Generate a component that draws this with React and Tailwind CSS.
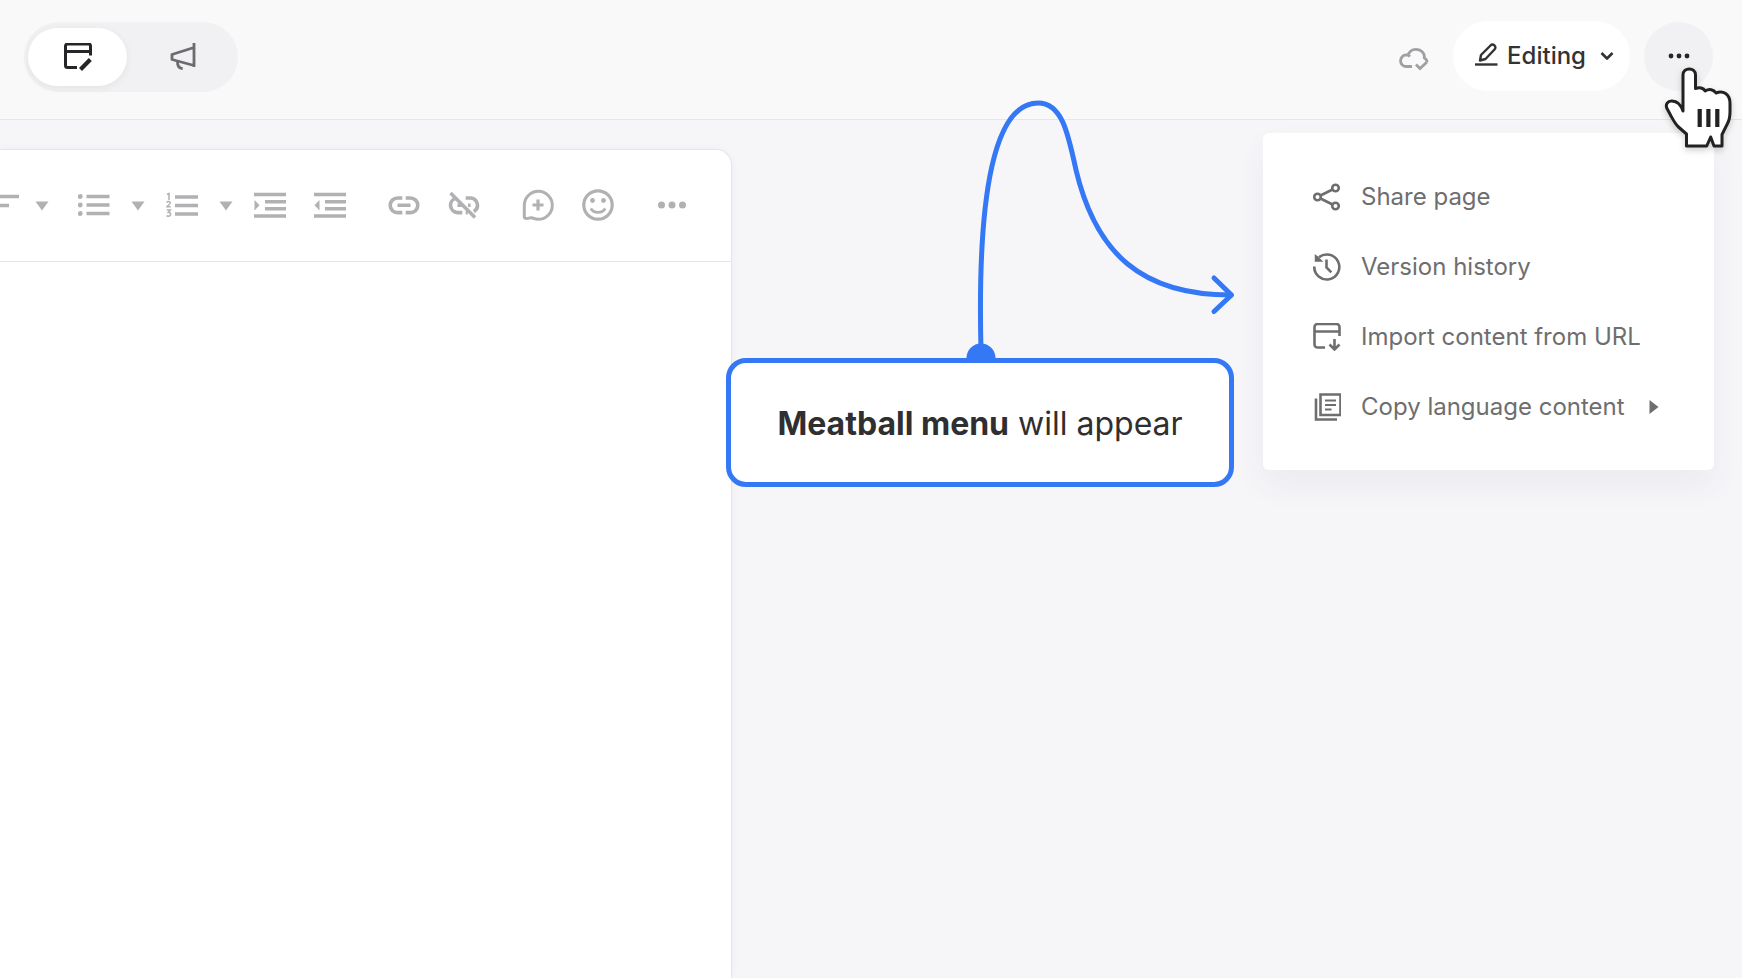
import React from 'react';

const Icon = ({ className = 'size-8', box = '0 0 32 32', width = 3, children }) => (
  <svg
    className={`shrink-0 ${className}`}
    viewBox={box}
    fill="none"
    stroke="currentColor"
    strokeWidth={width}
    aria-hidden="true"
  >
    {children}
  </svg>
);

const ToolButton = ({ label, children }) => (
  <button type="button" aria-label={label} className="shrink-0">
    <Icon width={3.6}>{children}</Icon>
  </button>
);

const CaretButton = ({ label, className = '' }) => (
  <button type="button" aria-label={label} className={`shrink-0 ${className}`}>
    <svg className="h-8 w-3.5" viewBox="0 0 14 32" fill="currentColor" aria-hidden="true">
      <path d="M0.5 12.5h13L7 21.5z" />
    </svg>
  </button>
);

const Toolbar = () => (
  <div className="box-content flex h-[109px] items-center justify-end gap-[42px] overflow-hidden border-b border-[#e4e4e7] pr-[43px] pb-0.5 text-[#b1b1b4]">
    <div className="flex shrink-0 items-center gap-[21px]">
      <div className="flex items-center gap-4">
        <ToolButton label="Align">
          <path d="M0 7.5h32M0 16.5h22" />
        </ToolButton>
        <CaretButton label="Align options" className="mr-2" />
      </div>
      <ToolButton label="Bulleted list">
        <path d="M8.5 7.500h23M8.5 16h23M8.5 24.500h23" />
        <g fill="currentColor" stroke="none">
          <circle cx="2.300" cy="7.500" r="2.400" />
          <circle cx="2.300" cy="16" r="2.400" />
          <circle cx="2.300" cy="24.500" r="2.400" />
        </g>
      </ToolButton>
      <CaretButton label="Bulleted list options" />
      <ToolButton label="Numbered list">
        <path d="M9 8h23M9 16.500h23M9 25h23" />
        <path
          strokeWidth="1.500"
          d="M1 5.500l2-1v6.500M.8 13.600c.6-1.500 3.600-1.300 3.400.4-.1 1.200-2.200 2.300-3.400 3.700h3.800M.8 21h3.500l-2 2.300c3.200-.2 3 4-.2 3.900-.8 0-1.200-.3-1.500-.7"
        />
      </ToolButton>
      <CaretButton label="Numbered list options" />
      <div className="flex items-center gap-7">
        <ToolButton label="Increase indent">
          <path d="M0 5.500h32M11 12.800h21M11 19.800h21M0 27h32" />
          <path d="M0.500 11v10.500L5.500 16.200z" fill="currentColor" stroke="none" />
        </ToolButton>
        <ToolButton label="Decrease indent">
          <path d="M0 5.500h32M11 12.800h21M11 19.800h21M0 27h32" />
          <path d="M5.500 11v10.500L.5 16.200z" fill="currentColor" stroke="none" />
        </ToolButton>
      </div>
    </div>
    <div className="flex shrink-0 gap-7">
      <ToolButton label="Insert link">
        <path d="M14.300 9H9.500a7.300 7.300 0 0 0 0 14.600h4.800M17.700 9H22.500a7.300 7.300 0 0 1 0 14.600h-4.800M9.500 16.300h13" />
      </ToolButton>
      <ToolButton label="Remove link">
        <path d="M7.500 9.400A7.300 7.300 0 0 0 9.500 23.600h4.800M17.700 9H22.500a7.300 7.300 0 0 1 3.300 13.600M17.700 23.600h2M9.500 16.300h6M20 16.300h2.500M2.500 4l24.500 24.500" />
      </ToolButton>
    </div>
    <div className="flex shrink-0 gap-7">
      <ToolButton label="Add comment">
        <path
          strokeWidth="3"
          strokeLinejoin="round"
          d="M2.300 27.500V16A14 14 0 1 1 16.300 30.300c-2.500 0-4.500-.9-6.500-1.500-1.800-.3-3.200.8-5 .8-1.600 0-2.500-.7-2.500-2.100z"
        />
        <path strokeWidth="3.200" d="M16 10.500v11M10.500 16h11" />
      </ToolButton>
      <ToolButton label="Insert emoji">
        <circle cx="16" cy="16" r="14.200" strokeWidth="3.200" />
        <path strokeWidth="2.800" d="M8.800 19.500c3.200 5.200 11.200 5.200 14.400 0" />
        <circle cx="10.500" cy="11.500" r="2.400" fill="currentColor" stroke="none" />
        <circle cx="21.500" cy="11.500" r="2.400" fill="currentColor" stroke="none" />
      </ToolButton>
    </div>
    <ToolButton label="More tools">
      <g fill="currentColor" stroke="none">
        <circle cx="5.500" cy="16" r="3.500" />
        <circle cx="16" cy="16" r="3.500" />
        <circle cx="26.500" cy="16" r="3.500" />
      </g>
    </ToolButton>
  </div>
);

const ModeSwitch = () => (
  <div className="flex h-[70px] w-[214px] items-center rounded-full bg-[#f1f1f3] px-1">
    <button
      type="button"
      aria-label="Edit content"
      aria-pressed="true"
      className="flex h-[58px] w-[99px] items-center justify-center rounded-full bg-white text-[#262629] shadow-[0_2px_8px_rgba(0,0,0,0.06)]"
    >
      <Icon className="size-7" box="0 0 28 28">
        <path strokeLinejoin="round" d="M13 24.500H3.500A2 2 0 0 1 1.500 22.500V3A2 2 0 0 1 3.500 1h21a2 2 0 0 1 2 2v9.500M1.500 8.500h25" />
        <path strokeWidth="4.200" d="M16.500 26.500l9.800-10" />
      </Icon>
    </button>
    <button
      type="button"
      aria-label="Announcements"
      aria-pressed="false"
      className="flex flex-1 items-center justify-center pl-1 text-[#6b6b70]"
    >
      <Icon className="size-7" box="0 0 28 28" width={2.8}>
        <path strokeLinejoin="round" d="M25 0v24M25 4.500L3 11.500v5L25 22.500M3 10.500v6.500" />
        <path d="M8.500 18c-.2 4.500 1 7.300 5.200 7.700" />
      </Icon>
    </button>
  </div>
);

const menuItems = [
  {
    label: 'Share page',
    icon: (
      <>
        <circle cx="4.500" cy="14" r="3.300" />
        <circle cx="22.500" cy="5" r="3.300" />
        <circle cx="22.500" cy="23" r="3.300" />
        <path d="M7.500 12.500l12-6M7.500 15.500l12 6" />
      </>
    ),
  },
  {
    label: 'Version history',
    icon: (
      <>
        <path d="M1.300 13.500A12.500 12.500 0 1 0 6 4.200" />
        <path d="M2.500 2.500l1.500 1 4.500 4.500h-6z" fill="currentColor" strokeWidth="1.500" />
        <path d="M13.500 6.500v8l4.800 4.800" />
      </>
    ),
  },
  {
    label: 'Import content from URL',
    icon: (
      <>
        <path d="M12 24.500H4.500a3 3 0 0 1-3-3V4a3 3 0 0 1 3-3h19a3 3 0 0 1 3 3v9M1.500 8.500H26.500" />
        <path d="M21.500 16v10M16.500 21.500l5 5 5-5" />
      </>
    ),
  },
  {
    label: 'Copy language content',
    submenu: true,
    icon: (
      <>
        <path d="M7.500 1.500h20v20.500h-20zM3 5.500V26.500H24" />
        <path strokeWidth="2.200" d="M12 7.500h11M12 12h11M12 16.500h6.500" />
      </>
    ),
  },
];

const MeatballMenu = () => (
  <ul
    role="menu"
    className="absolute top-[133px] right-7 z-10 w-[451px] rounded-md bg-white pt-[29px] pr-12 pb-7 pl-[50px] shadow-[0_16px_32px_rgba(60,60,110,0.06)]"
  >
    {menuItems.map(({ label, icon, submenu }) => (
      <li key={label} role="none">
        <button
          type="button"
          role="menuitem"
          className="flex h-[70px] w-full items-center gap-5 text-left text-2xl whitespace-nowrap text-[#6e6e6e]"
        >
          <Icon className="size-7" box="0 0 28 28" width={2.6}>
            {icon}
          </Icon>
          {label}
          {submenu && (
            <svg className="ml-1 h-3.5 w-2.5" viewBox="0 0 10 14" fill="currentColor" aria-hidden="true">
              <path d="M0.500 0v14L9.500 7z" />
            </svg>
          )}
        </button>
      </li>
    ))}
  </ul>
);

const HandCursor = () => (
  <svg
    className="pointer-events-none absolute top-[62px] right-0 z-20 h-[92px] w-[82px] drop-shadow-[0_3px_3px_rgba(0,0,0,0.18)]"
    viewBox="0 0 82 92"
    aria-hidden="true"
  >
    <path
      d="M23 49V13c0-8 12.500-8 12.500 0v13.500c4-1.500 8-.5 9.700 2.500 4-2.500 8.500-1.500 10.800 2 7-3 14 1 14 10.500v8c0 5-.6 8.500-2.500 12l-5.500 11v11.500H54l-3.300-9-4 9H26.500V72l-8-7c-3.500-3.200-5.500-7.500-8-12L7 46.500c-2-4.200.8-7.700 5-7.500 5.500.2 9 4 11 10z"
      fill="#fff"
      stroke="#222"
      strokeWidth="3"
      strokeLinejoin="round"
    />
    <path d="M39.700 47v18M48.400 47v18M57.300 47v18" stroke="#222" strokeWidth="4.200" />
  </svg>
);

const Header = () => (
  <header className="box-content flex h-[119px] items-start justify-between border-b border-[#e6e6e9] bg-[#f9f9fa] pr-[29px] pl-6">
    <div className="pt-[22px]">
      <ModeSwitch />
    </div>
    <div className="flex items-center pt-[21px]">
      <Icon className="mt-1.5 mr-6 size-[30px] text-[#a0a0a4]" box="0 0 30 30" width={2.800}>
        <path d="M13 22.500H7.500a5.800 5.800 0 0 1-.3-11.600c1.600.1 2.900.7 3.800 1.600M9 12c.7-4 4-6.700 7.800-6.700 5.500 0 9 4 8.600 8.700 1.700.8 2.600 2.200 2.900 4" />
        <path d="M17 20.500l4 4 7-6.500" />
      </Icon>
      <button
        type="button"
        className="flex h-[70px] items-center rounded-full bg-white px-4 text-2xl font-medium text-[#333336]"
      >
        <Icon className="mr-1.5 ml-1 size-7" box="0 0 28 28" width={2.400}>
          <path
            strokeLinejoin="round"
            d="M7 18.500l1-5.500L17.500 3.500c1.200-1.200 2.800-1 4 0 1.200 1.200 1.200 2.800 0 4L12.500 17 7 18.500z"
          />
          <path d="M2 22.500h22.500" />
        </Icon>
        Editing
        <Icon className="ml-3.5 h-2.5 w-3.5" box="0 0 14 10" width={2.600}>
          <path strokeLinejoin="round" d="M1.500 2l5.500 5.500 5.500-5.500" />
        </Icon>
      </button>
      <button
        type="button"
        aria-label="More options"
        aria-haspopup="menu"
        aria-expanded="true"
        className="ml-3.5 flex size-[69px] items-center justify-center rounded-full bg-[#f1f1f3] text-[#262629]"
      >
        <svg className="h-2 w-[22px]" viewBox="0 0 22 8" fill="currentColor" aria-hidden="true">
          <circle cx="3" cy="4" r="2.400" />
          <circle cx="11" cy="4" r="2.400" />
          <circle cx="19" cy="4" r="2.400" />
        </svg>
      </button>
    </div>
  </header>
);

const Callout = () => (
  <div className="absolute top-[358px] right-[508px] z-10 flex h-[129px] w-[508px] items-center justify-center rounded-[20px] border-5 border-[#3478f6] bg-white pt-0.5">
    <p className="text-[32px] whitespace-nowrap text-[#2f2f31]">
      <strong className="font-bold">Meatball menu</strong> will appear
    </p>
    <svg
      className="pointer-events-none absolute bottom-full left-[219px] h-[280px] w-[300px]"
      viewBox="0 3 300 280"
      fill="none"
      stroke="#3478f6"
      strokeWidth="5"
      strokeLinecap="round"
      strokeLinejoin="round"
      aria-hidden="true"
    >
      <path d="M31 270C27 110 45 23 88 23c24 0 30 30 38 67 20 84 66 125 155 125" />
      <path d="M264 198l17.500 17L264 231.500" />
      <circle cx="31" cy="278" r="14.500" fill="#3478f6" stroke="none" />
    </svg>
  </div>
);

const App = () => {
  return (
    <div className="relative flex min-h-screen flex-col overflow-hidden bg-[#f6f6f9] font-['Inter',sans-serif]">
      <Header />
      <main className="flex flex-1 flex-col pt-[29px]">
        <section
          aria-label="Page editor"
          className="w-[42%] flex-1 rounded-tr-2xl border-t border-r border-[#e6e6e9] bg-white shadow-[0_0_8px_rgba(60,60,110,0.04)]"
        >
          <Toolbar />
        </section>
      </main>
      <MeatballMenu />
      <Callout />
      <HandCursor />
    </div>
  );
};

export default App;
